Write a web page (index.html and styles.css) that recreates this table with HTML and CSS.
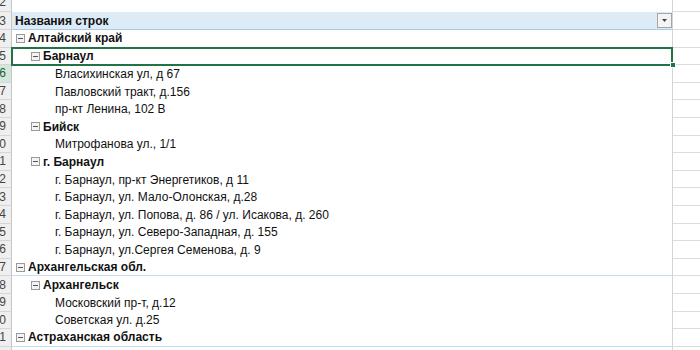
FILE: index.html
```html
<!DOCTYPE html>
<html lang="ru">
<head>
<meta charset="utf-8">
<link rel="stylesheet" href="styles.css">
</head>
<body>
<div class="sheet">
  <div class="row r-first"><div class="rh">2</div><div class="cell"></div><div class="ext"></div></div>
  <div class="row r-head"><div class="rh">3</div><div class="cell head"><span>Названия строк</span><span class="dd"><svg width="5" height="3" viewBox="0 0 5 3"><polygon points="0,0 5,0 2.5,3" fill="#444"/></svg></span></div><div class="ext"></div></div>
  <div class="row"><div class="rh">4</div><div class="cell l0 top"><span class="tog"></span>Алтайский край</div><div class="ext"></div></div>
  <div class="row"><div class="rh">5</div><div class="cell l1 sel"><span class="tog"></span>Барнаул<span class="handle"></span></div><div class="ext"></div></div>
  <div class="row"><div class="rh act">6</div><div class="cell l2">Власихинская ул, д 67</div><div class="ext"></div></div>
  <div class="row"><div class="rh">7</div><div class="cell l2">Павловский тракт, д.156</div><div class="ext"></div></div>
  <div class="row"><div class="rh">8</div><div class="cell l2">пр-кт Ленина, 102 В</div><div class="ext"></div></div>
  <div class="row"><div class="rh">9</div><div class="cell l1"><span class="tog"></span>Бийск</div><div class="ext"></div></div>
  <div class="row"><div class="rh">10</div><div class="cell l2">Митрофанова ул., 1/1</div><div class="ext"></div></div>
  <div class="row"><div class="rh">11</div><div class="cell l1"><span class="tog"></span>г. Барнаул</div><div class="ext"></div></div>
  <div class="row"><div class="rh">12</div><div class="cell l2">г. Барнаул, пр-кт Энергетиков, д 11</div><div class="ext"></div></div>
  <div class="row"><div class="rh">13</div><div class="cell l2">г. Барнаул, ул. Мало-Олонская, д.28</div><div class="ext"></div></div>
  <div class="row"><div class="rh">14</div><div class="cell l2">г. Барнаул, ул. Попова, д. 86 / ул. Исакова, д. 260</div><div class="ext"></div></div>
  <div class="row"><div class="rh">15</div><div class="cell l2">г. Барнаул, ул. Северо-Западная, д. 155</div><div class="ext"></div></div>
  <div class="row"><div class="rh">16</div><div class="cell l2">г. Барнаул, ул.Сергея Семенова, д. 9</div><div class="ext"></div></div>
  <div class="row"><div class="rh">17</div><div class="cell l0 top"><span class="tog"></span>Архангельская обл.</div><div class="ext"></div></div>
  <div class="row"><div class="rh">18</div><div class="cell l1"><span class="tog"></span>Архангельск</div><div class="ext"></div></div>
  <div class="row"><div class="rh">19</div><div class="cell l2">Московский пр-т, д.12</div><div class="ext"></div></div>
  <div class="row"><div class="rh">20</div><div class="cell l2">Советская ул. д.25</div><div class="ext"></div></div>
  <div class="row"><div class="rh">21</div><div class="cell l0 top"><span class="tog"></span>Астраханская область</div><div class="ext"></div></div>
  <div class="row"><div class="rh">22</div><div class="cell"></div><div class="ext"></div></div>
</div>
</body>
</html>
```
FILE: styles.css
```css
* { box-sizing: border-box; }
html, body { margin: 0; padding: 0; background: #fff; }
body {
  width: 700px;
  height: 350px;
  overflow: hidden;
  font-family: "Liberation Sans", Arial, sans-serif;
  font-size: 12px;
  color: #111;
}
.sheet { display: flex; flex-direction: column; }
.row { display: flex; height: 17.6px; flex: none; }
.r-first { height: 12px; }
.r-head { height: 18px; }
.rh {
  width: 12px;
  flex: none;
  background: #efefef;
  border-right: 1px solid #c6c6c6;
  border-bottom: 1px solid #d6d6d6;
  color: #444;
  font-size: 12px;
  display: flex;
  align-items: center;
  justify-content: flex-end;
  padding-right: 5px;
  overflow: hidden;
  white-space: nowrap;
}
.r-first .rh { align-items: flex-end; line-height: 17px; }
.rh.act { background: #d3e7da; color: #1f5d38; }
.cell {
  width: 661px;
  flex: none;
  border-right: 1px solid #d4d4d4;
  display: flex;
  align-items: center;
  white-space: nowrap;
  position: relative;
}
.ext {
  flex: 1;
  border-bottom: 1px solid #dcdcdc;
}
.head {
  background: #ddebf7;
  border-bottom: 1px solid #a9cbea;
  font-weight: bold;
  justify-content: space-between;
  padding-left: 3px;
}
.dd {
  width: 15px;
  height: 15px;
  margin-bottom: 1px;
  background: #f4f4f4;
  border: 1px solid #a6a6a6;
  display: flex;
  align-items: center;
  justify-content: center;
}
.l0 { padding-left: 4px; font-weight: bold; }
.l1 { padding-left: 19px; font-weight: bold; }
.l2 { padding-left: 43px; }
.top { border-bottom: 1px solid #c6dcf0; }
.tog {
  width: 9px;
  height: 9px;
  border: 1px solid #9a9a9a;
  background: #f3f3f3;
  margin-right: 3px;
  position: relative;
  flex: none;
}
.tog::after {
  content: "";
  position: absolute;
  left: 1px;
  right: 1px;
  top: 3px;
  height: 1px;
  background: #555;
}
.sel::after {
  content: "";
  position: absolute;
  top: -1px;
  bottom: -1px;
  left: -1px;
  right: -1px;
  border: 2px solid #217346;
  pointer-events: none;
}
.handle {
  position: absolute;
  right: -4px;
  bottom: -3px;
  width: 6px;
  height: 6px;
  background: #217346;
  border: 1px solid #fff;
  z-index: 2;
}
```
